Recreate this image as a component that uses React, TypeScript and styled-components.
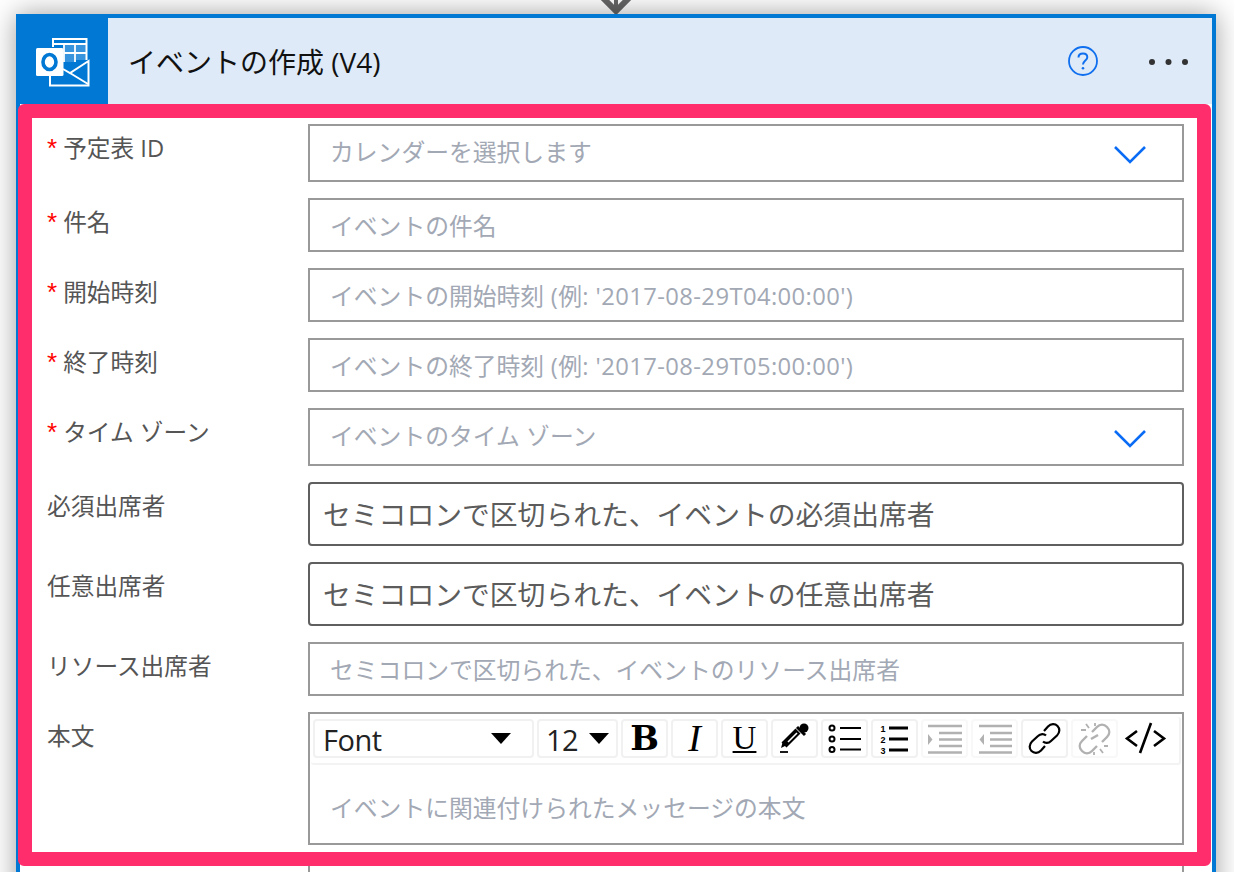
import React from 'react'
import styled, {createGlobalStyle} from 'styled-components'

const FONT = `"Open Sans", "Noto Sans CJK JP", sans-serif`

const GlobalStyle = createGlobalStyle`
    html, body {
        margin: 0;
        padding: 0;
        background: #fff;
        font-family: ${FONT};
    }
`
const Page = styled.div`
    height: 872px;
    overflow: hidden;
    box-sizing: border-box;
    padding-left: 16px;
    display: flex;
    flex-direction: column;
`
const Connector = styled.svg`
    display: block;
    width: 1200px;
    height: 14px;
    flex: none;
`
const Card = styled.div`
    width: 1200px;
    box-sizing: border-box;
    flex: none;
    border: 4px solid #0078d4;
    background: #fff;
    box-shadow: 0 0 26px rgba(0, 0, 0, 0.38);
`
const Header = styled.div`
    height: 86px;
    display: flex;
    align-items: center;
    background: #deeaf8;
`
const LogoBox = styled.div`
    width: 88px;
    height: 86px;
    box-sizing: border-box;
    padding: 2px 2px 0 0;
    background: #0078d4;
    display: flex;
    align-items: center;
    justify-content: center;
`
const Title = styled.div`
    margin-left: 20px;
    padding-top: 2px;
    font-size: 28px;
    line-height: 36px;
    color: #111;
`
const HeaderActions = styled.div`
    margin-left: auto;
    padding-right: 22px;
    display: flex;
    align-items: center;
    gap: 50px;
`
const Highlight = styled.div`
    position: relative;
    z-index: 1;
    margin: 0 1px 0 -2px;
    border: 14px solid #ff2d6c;
    border-radius: 6px;
    background: #fff;
    padding: 6px 13px 7px 15px;
    display: flex;
    flex-direction: column;
    gap: 16px;
`
const Row = styled.div`
    display: grid;
    grid-template-columns: 261px 876px;
`
const Label = styled.div`
    font-size: 23.7px;
    line-height: 36px;
    padding-top: 6px;
    color: #555;
    white-space: pre;
`
const Star = styled.span`
    color: #f00;
    font-family: "Liberation Sans", sans-serif;
    font-size: 26px;
    margin-right: 6px;
`
const Field = styled.div<{$height: number; $strong?: boolean; $select?: boolean}>`
    height: ${p => p.$height}px;
    box-sizing: border-box;
    border: 2px solid ${p => (p.$strong ? '#5f5f5f' : '#999')};
    border-radius: ${p => (p.$strong ? '4px' : '0')};
    padding: ${p => (p.$strong ? '0 13px 2px' : p.$select ? '0 20px 5px' : '0 20px 1px')};
    display: flex;
    align-items: center;
    justify-content: space-between;
    font-size: ${p => (p.$strong ? '27.8px' : '23.8px')};
    color: ${p => (p.$strong ? '#5c5c5c' : '#a2a8b4')};
    white-space: pre;
`
const Hint = styled.span`
    letter-spacing: 0.4px;
`
const Chevron = styled.svg`
    width: 34px;
    height: 20px;
    margin: 9px 15px 0 0;
    flex: none;
`
const Editor = styled.div`
    height: 133px;
    box-sizing: border-box;
    border: 2px solid #999;
    display: flex;
    flex-direction: column;
`
const Toolbar = styled.div`
    height: 48px;
    box-sizing: border-box;
    margin: 3px 1px 0;
    padding: 2px 2px 0;
    display: flex;
    gap: 3px;
    border: 0 solid #f3f3f3;
    border-width: 0 2px 2px 0;
    border-radius: 3px;
`
const ToolButton = styled.div<{$width?: number; $flat?: boolean; $dim?: boolean}>`
    width: ${p => p.$width ?? 47}px;
    height: 39px;
    box-sizing: border-box;
    flex: none;
    position: relative;
    display: flex;
    align-items: center;
    justify-content: space-between;
    border: 2px solid ${p => (p.$flat ? 'transparent' : p.$dim ? '#f8f8f8' : '#f1f1f1')};
    border-radius: 4px;
    color: #222;
    font-size: 29px;
`
const SelectText = styled.span<{$left: number}>`
    margin: 2px 0 0 ${p => p.$left}px;
    letter-spacing: -0.5px;
`
const SelectArrow = styled.i<{$right: number}>`
    width: 0;
    height: 0;
    margin-right: ${p => p.$right}px;
    border-style: solid;
    border-width: 11px 10px 0;
    border-color: #000 transparent transparent;
`
const LetterIcon = styled.span<{$kind: 'b' | 'i' | 'u'}>`
    width: 100%;
    text-align: center;
    color: #000;
    font-family: ${p => (p.$kind === 'b' ? '"DejaVu Serif"' : '"Liberation Serif"')}, serif;
    font-weight: ${p => (p.$kind === 'b' ? 800 : 400)};
    font-style: ${p => (p.$kind === 'i' ? 'italic' : 'normal')};
    font-size: ${p => (p.$kind === 'b' ? '34px' : p.$kind === 'i' ? '38px' : '33px')};
    line-height: 35px;
    text-decoration: ${p => (p.$kind === 'u' ? 'underline' : 'none')};
    text-decoration-thickness: 2px;
    text-underline-offset: 2px;
`
const ToolSvg = styled.svg<{$dim?: boolean}>`
    display: block;
    width: 47px;
    height: 39px;
    margin: -2px;
    flex: none;
    opacity: ${p => (p.$dim ? 0.3 : 1)};
`
const EditorBody = styled.div`
    flex: 1;
    padding-left: 20px;
    display: flex;
    align-items: center;
    font-size: 23.8px;
    color: #a2a8b4;
    padding-top: 4px;
`
const NextField = styled.div`
    margin: -6px 0 0 288px;
    width: 876px;
    height: 54px;
    box-sizing: border-box;
    border: 2px solid #999;
`
const MoreSvg = styled.svg`
    display: block;
    margin-top: 2px;
`

const OutlookLogo = () => (
    <svg width='54' height='50' viewBox='36 37 54 50'>
        <g fill='none' stroke='#fff' strokeWidth='2'>
            <path d='M53 47V39H86.500V60' />
            <path d='M53 44H86M64 44V62M75 44V62M64 53H86' strokeWidth='1.800' />
            <path d='M50 76V85.500H88.500V61L70 73L63 69' />
            <path d='M70 73L88 84' />
        </g>
        <path d='M65 45h9v7h-9zM76 45h10v7h-10zM76 54h10v6h-10zM65 54h9v8h-9z' fill='#fff' opacity='0.22' />
        <rect x='36' y='48' width='27.500' height='28' rx='1.500' fill='#fff' />
        <ellipse cx='49.500' cy='62' rx='6.500' ry='7.500' fill='none' stroke='#0078d4' strokeWidth='3.600' />
    </svg>
)
const HelpIcon = () => (
    <svg width='30' height='30' viewBox='0 0 30 30' fill='none' stroke='#0f6fee' strokeWidth='1.800'>
        <circle cx='15' cy='15' r='14' />
        <path d='M10.500 11.500C10.500 8.800 12.500 7.500 15 7.500C17.500 7.500 19.300 9 19.300 11.200C19.300 14.400 15 14.600 15 18.500' strokeWidth='2' />
        <circle cx='15' cy='22.300' r='1.300' fill='#0f6fee' stroke='none' />
    </svg>
)
const MoreIcon = () => (
    <MoreSvg width='42' height='8' viewBox='0 0 42 8' fill='#333'>
        <circle cx='4' cy='4' r='3' />
        <circle cx='20.500' cy='4' r='3' />
        <circle cx='37' cy='4' r='3' />
    </MoreSvg>
)
const DownChevron = () => (
    <Chevron viewBox='0 0 34 20' fill='none' stroke='#0a6cf5' strokeWidth='2.600'>
        <path d='M2 2L17 17L32 2' />
    </Chevron>
)
const PickerIcon = () => (
    <ToolSvg viewBox='0 0 47 39'>
        <path d='M13 26L27 12' stroke='#000' strokeWidth='7' />
        <path d='M17 23L26 14' stroke='#fff' strokeWidth='1.600' />
        <path d='M26 8L34 16' stroke='#000' strokeWidth='3' />
        <circle cx='33' cy='9' r='4.500' />
        <path d='M10 29L16 26L12 22Z' />
        <path d='M9 33H17' stroke='#000' strokeWidth='1.800' />
    </ToolSvg>
)
const BulletsIcon = () => (
    <ToolSvg viewBox='0 0 47 39'>
        <g fill='none' stroke='#000'>
            <circle cx='11' cy='9' r='2.500' strokeWidth='2' />
            <circle cx='11' cy='20' r='2.500' strokeWidth='2' />
            <circle cx='11' cy='30.500' r='2.500' strokeWidth='2' />
            <path d='M19 9H40M19 20H40M19 30.500H40' strokeWidth='1.800' />
        </g>
    </ToolSvg>
)
const NumbersIcon = () => (
    <ToolSvg viewBox='0 0 47 39'>
        <g fontFamily='"Liberation Sans", sans-serif' fontSize='9' fontWeight='700' textAnchor='middle'>
            <text x='12' y='13'>1</text>
            <text x='12' y='24'>2</text>
            <text x='12' y='35'>3</text>
        </g>
        <path d='M18 9H37M18 20H37M18 31H37' stroke='#000' strokeWidth='3' />
    </ToolSvg>
)
const IndentIcon = ({out}: {out?: boolean}) => (
    <ToolSvg viewBox='0 0 47 39' $dim>
        <path
            d={out ? 'M8 7H41M19 14H41M19 20.500H41M19 27H41M8 33.500H41' : 'M7 7H41M18 14H41M18 20.500H41M18 27H41M7 33.500H41'}
            stroke='#000'
            strokeWidth='2.400'
        />
        <path d={out ? 'M13 15V26L8.500 20.500Z' : 'M7 15V26L11.500 20.500Z'} />
    </ToolSvg>
)
const LinkIcon = () => (
    <ToolSvg viewBox='0 0 47 39'>
        <g fill='none' stroke='#000' strokeWidth='2.200'>
            <path d='M23 12L27 7.500C30 4.500 34 4.500 36.500 7C39 9.500 39 13.500 36 16.500L30 22C27.500 24.500 24 24.500 22 22.500' />
            <path d='M25 16.500C23 14.500 19.500 14.500 17 17L11 22.500C8 25.500 8 29.500 10.500 32C13 34.500 17 34.500 20 31.500L24 27' />
        </g>
    </ToolSvg>
)
const UnlinkIcon = () => (
    <ToolSvg viewBox='0 0 47 39' $dim>
        <g fill='none' stroke='#000' strokeWidth='2.400'>
            <path d='M21 13L26 8C29 5 33 5 36 8C39 11 39 15 36 18L31 23' />
            <path d='M16 17L11 22C8 25 8 29 11 32C14 35 18 35 21 32L26 27' />
            <path d='M20 20L27 16' />
            <path d='M15 5L18 9M10 11H15M29 30L32 34M33 27H37M24 4V7M23 33V36' strokeWidth='1.800' />
        </g>
    </ToolSvg>
)
const CodeIcon = () => (
    <ToolSvg viewBox='0 0 47 39'>
        <path d='M16 12L6 19.500L16 27M33 12L43 19.500L33 27M30 4L19 34' fill='none' stroke='#000' strokeWidth='2.600' />
    </ToolSvg>
)

type FieldRow = {
    label: string
    required?: boolean
    text: string
    hint?: string
    height: number
    select?: boolean
    strong?: boolean
}

const ROWS: FieldRow[] = [
    {label: '予定表 ID', required: true, text: 'カレンダーを選択します', height: 58, select: true},
    {label: '件名', required: true, text: 'イベントの件名', height: 54},
    {label: '開始時刻', required: true, text: 'イベントの開始時刻', hint: " (例: '2017-08-29T04:00:00')", height: 54},
    {label: '終了時刻', required: true, text: 'イベントの終了時刻', hint: " (例: '2017-08-29T05:00:00')", height: 54},
    {label: 'タイム ゾーン', required: true, text: 'イベントのタイム ゾーン', height: 58, select: true},
    {label: '必須出席者', text: 'セミコロンで区切られた、イベントの必須出席者', height: 64, strong: true},
    {label: '任意出席者', text: 'セミコロンで区切られた、イベントの任意出席者', height: 64, strong: true},
    {label: 'リソース出席者', text: 'セミコロンで区切られた、イベントのリソース出席者', height: 54},
]

export default function App() {
    return (
        <Page>
            <GlobalStyle />
            <Connector viewBox='0 0 1200 14'>
                <path d='M587 -2L600 11L613 -2' fill='none' stroke='#666' strokeWidth='6' />
                <path d='M600 0V8' stroke='#666' strokeWidth='4' />
            </Connector>
            <Card>
                <Header>
                    <LogoBox>
                        <OutlookLogo />
                    </LogoBox>
                    <Title>イベントの作成 (V4)</Title>
                    <HeaderActions>
                        <HelpIcon />
                        <MoreIcon />
                    </HeaderActions>
                </Header>
                <Highlight>
                    {ROWS.map(row => (
                        <Row key={row.label}>
                            <Label>
                                {row.required && <Star>*</Star>}
                                {row.label}
                            </Label>
                            <Field $height={row.height} $strong={row.strong} $select={row.select}>
                                <span>
                                    {row.text}
                                    {row.hint && <Hint>{row.hint}</Hint>}
                                </span>
                                {row.select && <DownChevron />}
                            </Field>
                        </Row>
                    ))}
                    <Row>
                        <Label>本文</Label>
                        <Editor>
                            <Toolbar>
                                <ToolButton $width={221}>
                                    <SelectText $left={8}>Font</SelectText>
                                    <SelectArrow $right={21} />
                                </ToolButton>
                                <ToolButton $width={81}>
                                    <SelectText $left={7}>12</SelectText>
                                    <SelectArrow $right={7} />
                                </ToolButton>
                                <ToolButton><LetterIcon $kind='b'>B</LetterIcon></ToolButton>
                                <ToolButton><LetterIcon $kind='i'>I</LetterIcon></ToolButton>
                                <ToolButton><LetterIcon $kind='u'>U</LetterIcon></ToolButton>
                                <ToolButton><PickerIcon /></ToolButton>
                                <ToolButton><BulletsIcon /></ToolButton>
                                <ToolButton><NumbersIcon /></ToolButton>
                                <ToolButton $dim><IndentIcon /></ToolButton>
                                <ToolButton $dim><IndentIcon out /></ToolButton>
                                <ToolButton><LinkIcon /></ToolButton>
                                <ToolButton $dim><UnlinkIcon /></ToolButton>
                                <ToolButton $flat><CodeIcon /></ToolButton>
                            </Toolbar>
                            <EditorBody>イベントに関連付けられたメッセージの本文</EditorBody>
                        </Editor>
                    </Row>
                </Highlight>
                <NextField />
            </Card>
        </Page>
    )
}
